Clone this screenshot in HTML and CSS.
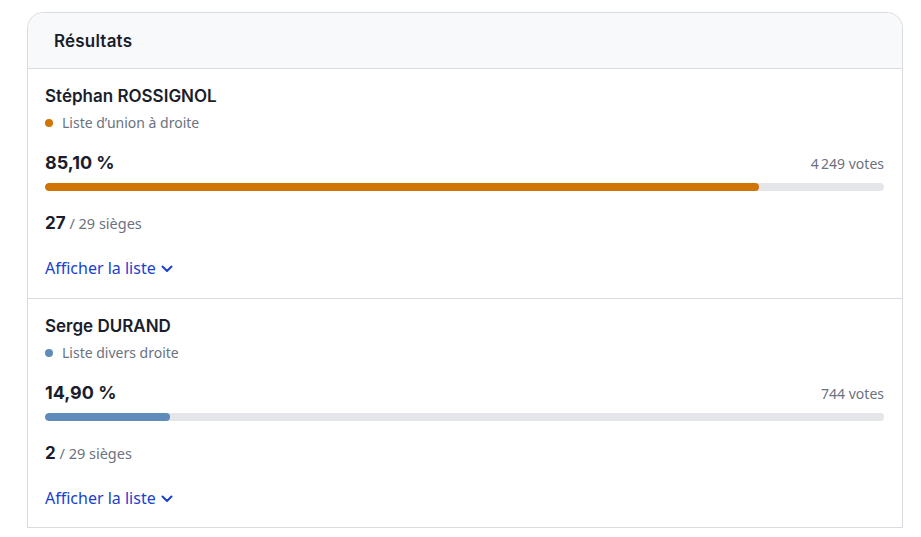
FILE: index.html
```html
<!DOCTYPE html>
<html lang="fr">
<head>
<meta charset="utf-8">
<title>Résultats</title>
<link rel="stylesheet" href="styles.css">
</head>
<body>
<div class="card">
  <div class="card-header">Résultats</div>
  <div class="candidate">
    <div class="name">Stéphan ROSSIGNOL</div>
    <div class="party"><span class="dot dot-orange"></span>Liste d’union à droite</div>
    <div class="score-row">
      <span class="pct">85,10 %</span>
      <span class="votes">4&#8239;249 votes</span>
    </div>
    <div class="bar"><div class="fill fill-orange" style="width:85.1%"></div></div>
    <div class="seats"><strong>27</strong> / 29 sièges</div>
    <a class="toggle" href="#">Afficher la liste <svg width="12" height="8" viewBox="0 0 12 8"><path d="M1.5 1.5 L6 6 L10.5 1.5" fill="none" stroke="currentColor" stroke-width="2" stroke-linecap="round" stroke-linejoin="round"/></svg></a>
  </div>
  <div class="candidate">
    <div class="name">Serge DURAND</div>
    <div class="party"><span class="dot dot-blue"></span>Liste divers droite</div>
    <div class="score-row">
      <span class="pct">14,90 %</span>
      <span class="votes">744 votes</span>
    </div>
    <div class="bar"><div class="fill fill-blue" style="width:14.9%"></div></div>
    <div class="seats"><strong>2</strong> / 29 sièges</div>
    <a class="toggle" href="#">Afficher la liste <svg width="12" height="8" viewBox="0 0 12 8"><path d="M1.5 1.5 L6 6 L10.5 1.5" fill="none" stroke="currentColor" stroke-width="2" stroke-linecap="round" stroke-linejoin="round"/></svg></a>
  </div>
</div>
</body>
</html>
```
FILE: styles.css
```css
* { box-sizing: border-box; }
body {
  margin: 0;
  background: #fff;
  font-family: "Noto Sans", "Open Sans", sans-serif;
  color: #111827;
}
.card {
  margin: 12px 0 0 27px;
  width: 876px;
  border: 1px solid #d9dbe0;
  border-radius: 16px 16px 0 0;
  background: #fff;
}
.card-header {
  height: 56px;
  padding: 0 26px;
  display: flex;
  align-items: center;
  background: #f8f9fb;
  border-bottom: 1px solid #d9dbe0;
  border-radius: 16px 16px 0 0;
  font-family: "Inter", sans-serif;
  font-weight: 600;
  font-size: 17px;
  letter-spacing: 0.2px;
  color: #1a1d2b;
}
.candidate {
  padding: 16px 18px 19px 17px;
}
.candidate:last-child {
  padding-bottom: 18px;
}
.candidate + .candidate {
  border-top: 1px solid #d9dbe0;
}
.name {
  font-family: "Inter", sans-serif;
  font-weight: 600;
  font-size: 17px;
  line-height: 22px;
  color: #1a1d2b;
}
.party {
  display: flex;
  align-items: center;
  margin-top: 6px;
  font-size: 14px;
  line-height: 20px;
  color: #6b7280;
}
.dot {
  width: 8px;
  height: 8px;
  border-radius: 50%;
  margin: 0 9px 0 0;
}
.dot-orange { background: #d17406; }
.dot-blue { background: #5f8bbb; }
.score-row {
  display: flex;
  justify-content: space-between;
  align-items: baseline;
  margin-top: 18px;
}
.pct {
  font-family: "Inter", sans-serif;
  font-weight: 700;
  font-size: 18px;
  line-height: 24px;
  color: #1a1d2b;
}
.votes {
  font-size: 14px;
  color: #6b7280;
}
.bar {
  margin-top: 8px;
  height: 8px;
  border-radius: 4px;
  background: #e5e6ea;
  overflow: hidden;
}
.fill { height: 100%; border-radius: 4px; }
.fill-orange { background: #d17406; }
.fill-blue { background: #5f8bbb; }
.seats {
  margin-top: 20px;
  font-size: 14.5px;
  line-height: 24px;
  color: #6b7280;
}
.seats strong {
  font-family: "Inter", sans-serif;
  font-weight: 700;
  font-size: 17px;
  color: #1a1d2b;
}
.toggle {
  display: inline-flex;
  align-items: center;
  gap: 5px;
  margin-top: 22px;
  font-size: 16px;
  line-height: 22px;
  color: #1a3fd0;
  text-decoration: none;
}
.toggle svg { margin-top: 2px; }
```
